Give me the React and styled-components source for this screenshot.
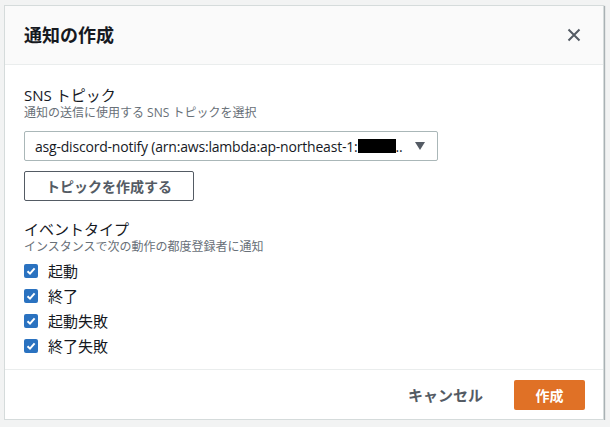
import React, { useState } from 'react';
import styled, { createGlobalStyle } from 'styled-components';

const GlobalStyle = createGlobalStyle`
  body {
    margin: 0;
    background: #f2f3f3;
    font-family: "Open Sans", "Noto Sans CJK JP", sans-serif;
    color: #16191f;
  }
`;

const events = ['起動', '終了', '起動失敗', '終了失敗'];

function App() {
    const [checked, setChecked] = useState(events.map(() => true));

    const toggle = (i) => {
        setChecked(checked.map((c, j) => (j === i ? !c : c)));
    };

    return (
        <>
            <GlobalStyle />
            <Page>
                <Modal>
                    <Header>
                        <Title>通知の作成</Title>
                        <CloseButton aria-label="close">
                            <svg width="14" height="14" viewBox="0 0 14 14">
                                <path d="M1.5 1.5 L12.5 12.5 M12.5 1.5 L1.5 12.5" stroke="#545b64" strokeWidth="2" fill="none" />
                            </svg>
                        </CloseButton>
                    </Header>
                    <Body>
                        <Field>
                            <Label>SNS トピック</Label>
                            <Description>通知の送信に使用する SNS トピックを選択</Description>
                            <Select>
                                <SelectText>
                                    asg-discord-notify (arn:aws:lambda:ap-northeast-1:<Redacted />..
                                </SelectText>
                                <Caret />
                            </Select>
                            <SecondaryButton>トピックを作成する</SecondaryButton>
                        </Field>
                        <Field top={18}>
                            <Label>イベントタイプ</Label>
                            <Description>インスタンスで次の動作の都度登録者に通知</Description>
                            <CheckList>
                                {events.map((ev, i) => (
                                    <CheckRow key={ev} onClick={() => toggle(i)}>
                                        <CheckBox on={checked[i]}>
                                            {checked[i] && (
                                                <svg width="10" height="10" viewBox="0 0 10 10">
                                                    <path d="M1.5 5.2 L4 7.6 L8.6 2.4" stroke="#fff" strokeWidth="2" fill="none" />
                                                </svg>
                                            )}
                                        </CheckBox>
                                        <CheckLabel>{ev}</CheckLabel>
                                    </CheckRow>
                                ))}
                            </CheckList>
                        </Field>
                    </Body>
                    <Footer>
                        <LinkButton>キャンセル</LinkButton>
                        <PrimaryButton>作成</PrimaryButton>
                    </Footer>
                </Modal>
            </Page>
        </>
    );
}

export default App;

const Page = styled.div`
    padding: 5px 0 0 4px;
`

const Modal = styled.div`
    width: 598px;
    height: 413px;
    background: #fff;
    border: 1px solid #d5dbdb;
    box-shadow: 1px 1px 1px rgba(0, 28, 36, 0.3);
    display: flex;
    flex-direction: column;
`

const Header = styled.div`
    height: 58px;
    background: #fafafa;
    border-bottom: 1px solid #eaeded;
    display: flex;
    align-items: center;
    justify-content: space-between;
    padding: 0 22px 0 19px;
`

const Title = styled.h2`
    margin: 0;
    font-size: 18px;
    font-weight: 700;
    color: #16191f;
    line-height: 22px;
`

const CloseButton = styled.button`
    border: none;
    background: none;
    padding: 0;
    display: flex;
    cursor: pointer;
`

const Body = styled.div`
    flex: 1;
    padding: 20px 19px 0;
`

const Field = styled.div`
    margin-top: ${props => props.top || 0}px;
`

const Label = styled.div`
    font-size: 15px;
    line-height: 20px;
    color: #16191f;
`

const Description = styled.div`
    font-size: 12px;
    line-height: 16px;
    color: #687078;
`

const Select = styled.div`
    margin-top: 10px;
    width: 414px;
    height: 30px;
    box-sizing: border-box;
    border: 1px solid #aab7b8;
    border-radius: 2px;
    display: flex;
    align-items: center;
    padding: 0 12px 0 10px;
`

const SelectText = styled.span`
    flex: 1;
    font-size: 14px;
    letter-spacing: -0.2px;
    white-space: nowrap;
    overflow: hidden;
    color: #16191f;
    display: flex;
    align-items: center;
`

const Redacted = styled.span`
    display: inline-block;
    flex-shrink: 0;
    width: 38px;
    height: 14px;
    background: #000;
`

const Caret = styled.span`
    flex-shrink: 0;
    width: 0;
    height: 0;
    border-left: 5px solid transparent;
    border-right: 5px solid transparent;
    border-top: 8px solid #545b64;
    margin-left: 5px;
`

const SecondaryButton = styled.button`
    display: block;
    margin-top: 10px;
    width: 170px;
    height: 30px;
    border: 1px solid #545b64;
    border-radius: 2px;
    background: #fff;
    font-family: inherit;
    font-size: 14px;
    font-weight: 700;
    color: #545b64;
    cursor: pointer;
`

const CheckList = styled.div`
    margin-top: 3px;
    display: flex;
    flex-direction: column;
`

const CheckRow = styled.label`
    height: 25px;
    flex-shrink: 0;
    display: flex;
    align-items: center;
    cursor: pointer;
`

const CheckBox = styled.span`
    width: 14px;
    height: 14px;
    box-sizing: border-box;
    border-radius: 2px;
    background: ${props => props.on ? '#2a72c0' : '#fff'};
    border: ${props => props.on ? 'none' : '1px solid #aab7b8'};
    display: flex;
    align-items: center;
    justify-content: center;
`

const CheckLabel = styled.span`
    margin-left: 10px;
    font-size: 15px;
    line-height: 20px;
    color: #16191f;
`

const Footer = styled.div`
    height: 49px;
    border-top: 1px solid #eaeded;
    display: flex;
    align-items: center;
    justify-content: flex-end;
    padding: 0 18px;
`

const LinkButton = styled.button`
    border: none;
    background: none;
    padding: 0;
    font-family: inherit;
    font-size: 15px;
    font-weight: 700;
    color: #545b64;
    margin-right: 31px;
    cursor: pointer;
`

const PrimaryButton = styled.button`
    width: 71px;
    height: 30px;
    border: none;
    border-radius: 2px;
    background: #e07126;
    color: #fff;
    font-family: inherit;
    font-size: 14px;
    font-weight: 700;
    cursor: pointer;
`
